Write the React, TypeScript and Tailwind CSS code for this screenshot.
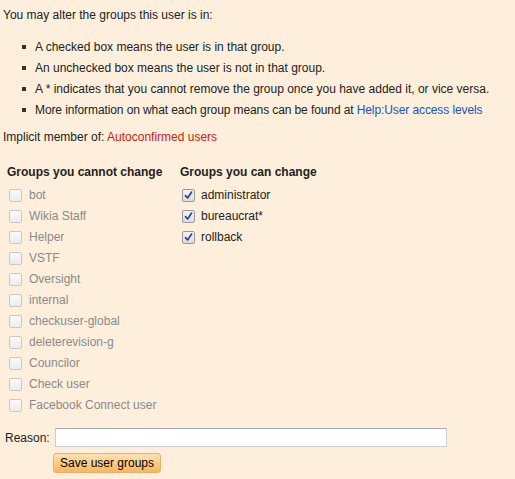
import React from "react";

const fixedGroups = [
  "bot",
  "Wikia Staff",
  "Helper",
  "VSTF",
  "Oversight",
  "internal",
  "checkuser-global",
  "deleterevision-g",
  "Councilor",
  "Check user",
  "Facebook Connect user",
];

const changeableGroups = ["administrator", "bureaucrat*", "rollback"];

const Box = ({ checked }: { checked?: boolean }) => (
  <span
    className={
      "inline-flex h-[13px] w-[13px] shrink-0 items-center justify-center rounded-[2px] border " +
      (checked
        ? "border-[#9a9a9a] bg-gradient-to-b from-[#f4f4f4] to-[#dcdcdc]"
        : "border-[#c8c8c8] bg-gradient-to-b from-[#fafafa] to-[#ececec]")
    }
  >
    {checked && (
      <svg width="9" height="9" viewBox="0 0 9 9">
        <path
          d="M1.5 4.6 L3.6 7 L7.6 1"
          fill="none"
          stroke="#2d3f8f"
          strokeWidth="1.6"
          strokeLinecap="round"
          strokeLinejoin="round"
        />
      </svg>
    )}
  </span>
);

export default function App() {
  return (
    <div className="h-[479px] w-[515px] overflow-hidden whitespace-nowrap bg-[#fdefdc] text-[12px] leading-[16px] text-[#222] font-['Liberation_Sans',Arial,sans-serif]">
      <div className="pl-[3px] pt-[7px]">
        <p>You may alter the groups this user is in:</p>
        <ul className="mt-[16px] flex flex-col gap-[5px] pl-[19px]">
          {[
            "A checked box means the user is in that group.",
            "An unchecked box means the user is not in that group.",
            "A * indicates that you cannot remove the group once you have added it, or vice versa.",
          ].map((t) => (
            <li key={t} className="flex items-center">
              <span className="mr-[9px] h-[4px] w-[4px] bg-[#333]" />
              {t}
            </li>
          ))}
          <li className="flex items-center tracking-[-0.1px]">
            <span className="mr-[9px] h-[4px] w-[4px] bg-[#333]" />
            More information on what each group means can be found at&nbsp;
            <a className="text-[#1d4fc4]">Help:User access levels</a>
          </li>
        </ul>
        <p className="mt-[11px]">
          Implicit member of: <a className="text-[#cc1c10]">Autoconfirmed users</a>
        </p>
      </div>

      <div className="mt-[19px] flex pl-[7px]">
        <div className="w-[173px]">
          <div className="font-bold">Groups you cannot change</div>
          <div className="mt-[7px] flex flex-col gap-[5px] pl-[2px]">
            {fixedGroups.map((g) => (
              <label key={g} className="flex items-center gap-[7px] text-[#8a8a8a]">
                <Box />
                {g}
              </label>
            ))}
          </div>
        </div>
        <div>
          <div className="font-bold">Groups you can change</div>
          <div className="mt-[7px] flex flex-col gap-[5px] pl-[2px]">
            {changeableGroups.map((g) => (
              <label key={g} className="flex items-center gap-[6px]">
                <Box checked />
                {g}
              </label>
            ))}
          </div>
        </div>
      </div>

      <div className="mt-[15px] flex items-center pl-[5px]">
        <span className="w-[50px]">Reason:</span>
        <div className="h-[19px] w-[392px] border border-[#c9cdd6] border-t-[#a8a8a8] bg-white" />
      </div>
      <div className="mt-[6px] pl-[53px]">
        <button className="h-[20px] w-[108px] rounded-[3px] border border-[#e8b06a] bg-gradient-to-b from-[#ffe2b0] to-[#f9b65a] text-[12px] leading-[18px] text-black">
          Save user groups
        </button>
      </div>
    </div>
  );
}
